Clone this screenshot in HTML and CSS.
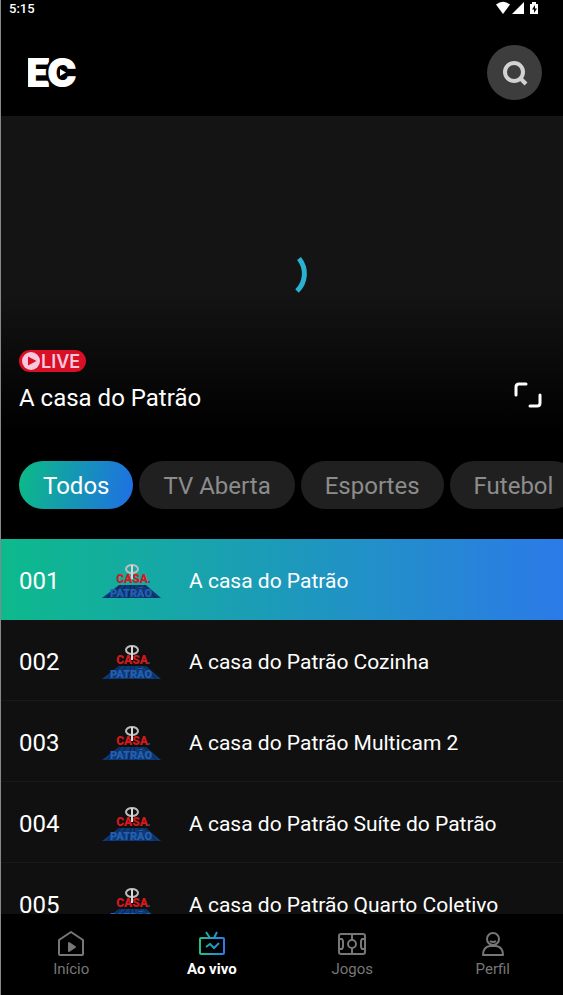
FILE: index.html
```
<!DOCTYPE html>
<html lang="pt-BR">
<head>
  <meta charset="UTF-8" />
  <meta name="viewport" content="width=device-width, initial-scale=1.0"/>
  <title>Ao vivo</title>
  <link rel="stylesheet" href="styles.css">
</head>
<body>
  <svg class="sprite" width="0" height="0" aria-hidden="true">
    <symbol id="casa" viewBox="0 0 62 36">
      <path d="M18 22h27l15 13H1z" fill="#0e3a78"/>
      <path d="M20 22L6 35M25 22l-8 13M30 22l-3 13M33 22l2 13M38 22l7 13M43 22l12 13" stroke="#0b2548"/>
      <text class="casa-floor" x="30" y="34" text-anchor="middle">PATRÃO</text>
      <text class="casa-name" x="31" y="20" text-anchor="middle">CASA</text>
      <circle cx="48" cy="19" r="1" fill="#3c4c66"/>
      <ellipse cx="31" cy="6" rx="6" ry="4" fill="none" stroke="#bcbcbc" stroke-width="2"/>
      <path d="M31 2v14" stroke="#d8d8d8" stroke-width="2"/>
    </symbol>
  </svg>

  <div class="app">
    <div class="status">
      <span>5:15</span>
      <svg width="44" height="14" viewBox="0 0 44 14" fill="#fff">
        <path d="M0 3.500Q7-2 14 3.500L7 13z"/>
        <path d="M28 1v12H16z"/>
        <path d="M36 1h4v2h2v10h-8V3h2z"/>
        <path d="M39 4l-3 4.500h2v3.500l3-4.500h-2z" fill="#000"/>
      </svg>
    </div>

    <header class="header">
      <a href="#" class="logo" aria-label="EC">
        <svg width="50" height="32" viewBox="0 0 50 32">
          <text class="logo-text" x="-2" y="30">E</text>
          <text class="logo-text logo-c" x="19" y="30">C</text>
          <path d="M32 12l6 3.500-6 3.500z" fill="#fff"/>
        </svg>
      </a>
      <button class="search" aria-label="Buscar">
        <svg width="26" height="26" viewBox="0 0 26 26" fill="none" stroke="#d2d2d2">
          <circle cx="12" cy="12" r="9" stroke-width="4"/>
          <path d="M18 18l6 6" stroke-width="4"/>
        </svg>
      </button>
    </header>

    <section class="player">
      <svg class="spinner" width="58" height="50" viewBox="0 0 58 50">
        <path d="M47 8.500A24 24 0 0 1 45 41" fill="none" stroke="#29b3d3" stroke-width="5"/>
      </svg>
      <div class="now">
        <div>
          <span class="live">
            <svg width="18" height="18" viewBox="0 0 18 18">
              <circle cx="9" cy="9" r="9" fill="#f9c6dc"/>
              <path d="M6 4.500l8.500 4.500L6 13.500z" fill="#d80f25"/>
            </svg>LIVE</span>
          <h1>A casa do Patrão</h1>
        </div>
        <button class="expand" aria-label="Tela cheia">
          <svg width="28" height="26" viewBox="0 0 28 26" fill="none" stroke="#fff" stroke-width="3" stroke-linecap="round">
            <path d="M2 13V5q0-3 3-3h7M26 13v8q0 3-3 3h-7"/>
          </svg>
        </button>
      </div>
    </section>

    <div class="chips">
      <button class="chip active">Todos</button>
      <button class="chip">TV Aberta</button>
      <button class="chip">Esportes</button>
      <button class="chip">Futebol</button>
    </div>

    <main class="channels">
      <a href="#" class="channel active">
        <span class="num">001</span>
        <svg class="thumb"><use href="#casa"/></svg>
        <span class="name">A casa do Patrão</span>
      </a>
      <a href="#" class="channel">
        <span class="num">002</span>
        <svg class="thumb"><use href="#casa"/></svg>
        <span class="name">A casa do Patrão Cozinha</span>
      </a>
      <a href="#" class="channel">
        <span class="num">003</span>
        <svg class="thumb"><use href="#casa"/></svg>
        <span class="name">A casa do Patrão Multicam 2</span>
      </a>
      <a href="#" class="channel">
        <span class="num">004</span>
        <svg class="thumb"><use href="#casa"/></svg>
        <span class="name">A casa do Patrão Suíte do Patrão</span>
      </a>
      <a href="#" class="channel">
        <span class="num">005</span>
        <svg class="thumb"><use href="#casa"/></svg>
        <span class="name">A casa do Patrão Quarto Coletivo</span>
      </a>
    </main>

    <nav class="tabs">
      <a href="#" class="tab">
        <svg width="28" height="26" viewBox="0 0 28 26" fill="none" stroke="currentColor" stroke-width="2" stroke-linejoin="round">
          <path d="M2 9L14 1l12 8v14q0 1-1 1H3q-1 0-1-1z"/>
          <path d="M12 12v8l6-4z" fill="currentColor"/>
        </svg>
        Início
      </a>
      <a href="#" class="tab active">
        <svg width="28" height="26" viewBox="0 0 28 26" fill="none" stroke="url(#tv)" stroke-width="2">
          <defs>
            <linearGradient id="tv" gradientUnits="userSpaceOnUse" x1="2" y1="0" x2="26" y2="0">
              <stop offset="0" stop-color="#1fbf8f"/>
              <stop offset="1" stop-color="#2a7de8"/>
            </linearGradient>
          </defs>
          <rect x="2" y="7" width="24" height="16" rx="1"/>
          <path d="M8 1l4 6M19 1l-3 6M8 16l4-3 4 4 5-5"/>
        </svg>
        Ao vivo
      </a>
      <a href="#" class="tab">
        <svg width="28" height="26" viewBox="0 0 28 26" fill="none" stroke="currentColor" stroke-width="2">
          <rect x="1" y="3" width="26" height="20" rx="2"/>
          <circle cx="14" cy="13" r="4"/>
          <path d="M14 3v6M14 17v6M1 8h3l1 2v6l-1 2H1M27 8h-3l-1 2v6l1 2h3"/>
        </svg>
        Jogos
      </a>
      <a href="#" class="tab">
        <svg width="28" height="26" viewBox="0 0 28 26" fill="none" stroke="currentColor" stroke-width="2" stroke-linejoin="round">
          <circle cx="14" cy="8" r="6"/>
          <path d="M11 10q3 2 6 0M4 24q0-8 7-9h6q7 1 7 9z"/>
        </svg>
        Perfil
      </a>
    </nav>
  </div>
</body>
</html>
```

FILE: styles.css
```
* {
  box-sizing: border-box;
}
body {
  margin: 0;
  background: #000;
  color: #fff;
  font-family: Roboto, sans-serif;
}
a {
  color: inherit;
  text-decoration: none;
}
button {
  border: none;
  padding: 0;
  color: inherit;
  font-family: inherit;
  cursor: pointer;
}
svg {
  display: block;
  flex-shrink: 0;
}
.sprite {
  position: absolute;
}
.app {
  display: flex;
  flex-direction: column;
  height: 100vh;
  overflow: hidden;
  border-left: 1px solid #85898a;
}
.status {
  display: flex;
  justify-content: space-between;
  padding: 1px 23px 0 8px;
  font-size: 13px;
  font-weight: 500;
  line-height: 16px;
}
.header {
  display: flex;
  justify-content: space-between;
  align-items: center;
  padding: 28px 21px 16px 27px;
}
.logo-text {
  font-family: Inter, sans-serif;
  font-size: 40px;
  font-weight: 900;
  fill: #fff;
}
.logo-c {
  stroke: #000;
  stroke-width: 5px;
  paint-order: stroke;
}
.search {
  display: flex;
  align-items: center;
  justify-content: center;
  width: 55px;
  height: 55px;
  border-radius: 50%;
  background: #3d3d3d;
}
.player {
  display: flex;
  flex-direction: column;
  height: 318px;
  padding: 134px 21px 20px 18px;
  background: linear-gradient(#141414 55%, #000);
}
.spinner {
  align-self: center;
}
.now {
  display: flex;
  justify-content: space-between;
  align-items: flex-end;
  margin-top: auto;
}
.now h1 {
  margin: 10px 0 0;
  font-size: 24px;
  font-weight: 400;
  line-height: 32px;
}
.live {
  display: flex;
  align-items: center;
  gap: 1px;
  width: 67px;
  height: 22px;
  padding-left: 3px;
  border-radius: 11px;
  background: #d80f25;
  color: #f9c6dc;
  font-family: Inter, sans-serif;
  font-size: 18px;
  font-weight: 600;
}
.expand {
  margin-bottom: 6px;
  background: none;
}
.chips {
  display: flex;
  gap: 6px;
  padding: 27px 0 30px 18px;
  overflow: hidden;
}
.chip {
  flex-shrink: 0;
  height: 48px;
  padding: 2px 24px 0;
  border-radius: 24px;
  background: #202020;
  color: #8c8c8c;
  font-size: 24px;
}
.chip.active {
  background: linear-gradient(100deg, #0cbb86, #1f6fe5);
  color: #fff;
}
.channels {
  flex: 1;
  min-height: 0;
  overflow: hidden;
  background: #101010;
}
.channel {
  display: flex;
  align-items: center;
  height: 81px;
  padding: 3px 0 0 18px;
  border-bottom: 1px solid #1a1a1a;
}
.channel.active {
  border-bottom: none;
  background: linear-gradient(90deg, #0dba8c, #2c7ae8);
}
.num {
  width: 82px;
  font-size: 24px;
}
.thumb {
  width: 62px;
  height: 36px;
}
.casa-name {
  font-family: Roboto, sans-serif;
  font-size: 12px;
  font-weight: 900;
  fill: #d31a1c;
}
.casa-floor {
  font-family: Roboto, sans-serif;
  font-size: 11px;
  font-weight: 900;
  fill: #2460b4;
}
.name {
  margin-left: 26px;
  font-size: 21px;
  white-space: nowrap;
}
.tabs {
  display: grid;
  grid-template-columns: repeat(4, 1fr);
  height: 81px;
  padding-top: 17px;
  background: #000;
}
.tab {
  display: flex;
  flex-direction: column;
  align-items: center;
  gap: 3px;
  color: #777;
  font-size: 15px;
  line-height: 18px;
}
.tab.active {
  color: #fff;
  font-weight: 700;
}
```
